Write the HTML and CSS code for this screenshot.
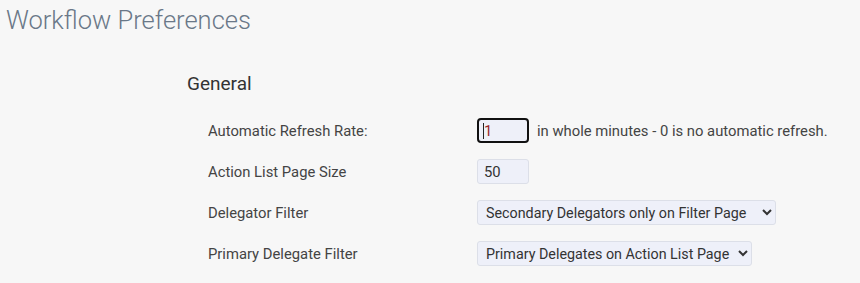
FILE: index.html
```html
<!DOCTYPE html>
<html lang="en">
<head>
<meta charset="utf-8">
<title>Workflow Preferences</title>
<link rel="stylesheet" href="styles.css">
</head>
<body>
<div class="page">
  <h1 class="title">Workflow Preferences</h1>
  <section class="group">
    <h2 class="group-title">General</h2>
    <div class="form">
      <label class="label" for="refresh">Automatic Refresh Rate:</label>
      <div class="field">
        <span class="input input-focus"><span class="caret"></span><span class="val-red">1</span></span>
        <span class="hint">in whole minutes - 0 is no automatic refresh.</span>
      </div>
      <label class="label" for="size">Action List Page Size</label>
      <div class="field">
        <input class="input" id="size" type="text" value="50">
      </div>
      <label class="label" for="delegator">Delegator Filter</label>
      <div class="field">
        <select class="select" id="delegator">
          <option>Secondary Delegators only on Filter Page</option>
        </select>
      </div>
      <label class="label" for="primary">Primary Delegate Filter</label>
      <div class="field">
        <select class="select" id="primary">
          <option>Primary Delegates on Action List Page</option>
        </select>
      </div>
    </div>
  </section>
</div>
</body>
</html>
```
FILE: styles.css
```css
html, body {
  margin: 0;
  padding: 0;
  background: #f7f7f7;
}
body {
  font-family: Roboto, "Noto Sans", "Liberation Sans", sans-serif;
  color: #444;
}
.page {
  padding: 4px 0 0 6px;
}
.title {
  margin: 0;
  font-size: 25.5px;
  font-weight: 300;
  color: #6a7888;
  line-height: 32px;
}
.group {
  padding: 36px 0 0 181px;
}
.group-title {
  margin: 0;
  font-size: 19px;
  font-weight: 400;
  color: #333;
  line-height: 24px;
}
.form {
  display: grid;
  grid-template-columns: 269px auto;
  grid-auto-rows: 41px;
  padding: 14px 0 0 21px;
  align-items: center;
}
.label {
  font-size: 14.8px;
  color: #444;
}
.field {
  display: flex;
  align-items: center;
  gap: 8px;
}
.input {
  box-sizing: border-box;
  width: 52px;
  height: 25px;
  margin: 0;
  padding: 0 6px;
  border: 1px solid #dcdfe8;
  border-radius: 3px;
  background: #eef0f9;
  font-family: inherit;
  font-size: 14.8px;
  color: #333;
  display: inline-flex;
  align-items: center;
}
.input-focus {
  border: 2px solid #111;
  border-radius: 4px;
  padding: 0 4px;
}
.caret {
  display: inline-block;
  width: 1px;
  height: 16px;
  background: #222;
}
.val-red {
  color: #9a2b2b;
  font-size: 14.8px;
  line-height: 16px;
}
.hint {
  font-size: 14.8px;
  color: #444;
}
.select {
  box-sizing: border-box;
  height: 25px;
  margin: 0;
  padding: 0 4px;
  border: 1px solid #dcdfe8;
  border-radius: 3px;
  background-color: #eef0f9;
  font-family: inherit;
  font-size: 14.3px;
  color: #333;
}
#delegator {
  width: 299px;
}
#primary {
  width: 275px;
}
```
